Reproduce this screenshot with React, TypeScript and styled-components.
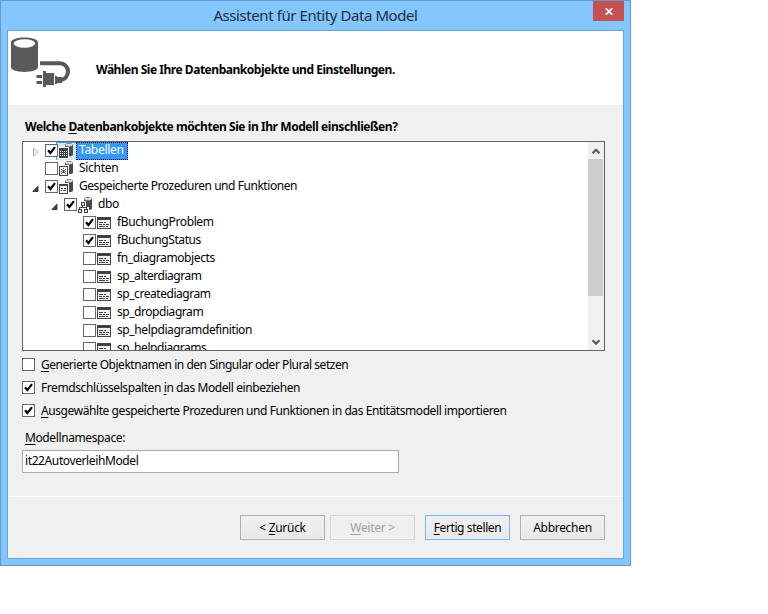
import React from "react";
import styled, { createGlobalStyle, css } from "styled-components";

const Global = createGlobalStyle`
  * { box-sizing: border-box; }
  body {
    margin: 0;
    background: #fff;
    color: #000;
    font: 12px/18px "Noto Sans", "Open Sans", sans-serif;
  }
  svg { display: block; }
`;

const Text = styled.span<{ $size?: number; $track?: number; $bold?: boolean }>`
  font-size: ${(p) => p.$size ?? 12}px;
  letter-spacing: ${(p) => p.$track ?? -0.39}px;
  font-weight: ${(p) => (p.$bold ? 700 : 400)};
  white-space: pre;
`;

const Key = styled.span`
  text-decoration: underline;
  text-decoration-thickness: 1px;
  text-underline-offset: 2px;
  text-decoration-skip-ink: none;
`;

const Window = styled.main`
  width: 631px;
  height: 566px;
  display: flex;
  flex-direction: column;
  padding: 0 6px 6px;
  background: #84c6ff;
  border: 1px solid #6699c8;
`;

const TitleBar = styled.header`
  height: 29px;
  flex: none;
  display: grid;
  grid-template-columns: 31px 1fr 31px;
  align-items: start;
  text-align: center;
  line-height: 29px;
  color: #1c2c3c;
`;

const CloseButton = styled.button`
  width: 31px;
  height: 20px;
  padding: 1px 0 0 12px;
  border: 0;
  background: #c75050;
`;

const Client = styled.div`
  flex: 1;
  display: flex;
  flex-direction: column;
  background: #f0f0f0;
  border: 1px solid #6ba4d8;
`;

const Banner = styled.section`
  height: 74px;
  flex: none;
  display: flex;
  align-items: center;
  background: #fff;
`;

const BannerIcon = styled.div`
  width: 88px;
  height: 74px;
  padding: 6px 0 0 2px;
`;

const BannerText = styled(Text)`
  padding-top: 3px;
`;

const Content = styled.section`
  height: 392px;
  flex: none;
  padding: 13px 18px 0 14px;
  border-bottom: 1px solid #fff;
`;

const Question = styled.div`
  height: 23px;
  padding-left: 3px;
`;

const Tree = styled.div`
  display: flex;
  height: 210px;
  background: #fff;
  border: 1px solid #646464;
`;

const Rows = styled.div`
  flex: 1;
  overflow: hidden;
`;

const Row = styled.div<{ $level: number }>`
  height: 18px;
  display: flex;
  padding-left: ${(p) => p.$level * 19}px;
`;

const Expander = styled.span`
  width: 22px;
  padding: 5px 0 0 9px;
`;

const Box = styled.span`
  width: 13px;
  height: 13px;
  flex: none;
  background: #fff;
  border: 1px solid #666;
`;

const TreeBox = styled(Box)`
  margin-top: 2px;
  position: relative;
  z-index: 1;
`;

const IconCell = styled.span<{ $active?: boolean }>`
  width: 20px;
  margin-left: -2px;
  padding-left: 1px;
  height: 18px;
  ${(p) => p.$active && css`
    background: #cfe9fa;
    box-shadow: inset 1px 1px #3ba4df;
  `}
`;

const Label = styled(Text)<{ $selected?: boolean }>`
  height: 18px;
  padding: 0 3px;
  line-height: 16px;
  ${(p) => p.$selected && css`
    width: 52px;
    color: #fff;
    background: #3399ff;
    outline: 1px dotted #000;
    outline-offset: -1px;
  `}
`;

const ScrollBar = styled.div`
  width: 16px;
  display: flex;
  flex-direction: column;
  justify-content: space-between;
  padding-right: 1px;
  background: #f0f0f0;
`;

const ScrollArrow = styled.span`
  height: 17px;
  padding: 6px 0 0 4px;
`;

const Thumb = styled.span`
  height: 137px;
  margin-bottom: 37px;
  background: #cdcdcd;
`;

const Options = styled.div`
  padding-top: 2px;
`;

const Option = styled.div`
  height: 23px;
  display: flex;
  align-items: center;
  gap: 6px;
  line-height: 17px;
`;

const FieldLabel = styled.div`
  height: 28px;
  padding: 7px 0 0 3px;
`;

const Field = styled.div`
  width: 377px;
  height: 23px;
  padding-left: 2px;
  line-height: 20px;
  background: #fff;
  border: 1px solid #abadb3;
`;

const Footer = styled.footer`
  display: flex;
  justify-content: flex-end;
  padding: 18px 18px 0 0;
`;

const Button = styled.button<{ $kind?: "default" | "disabled"; $gap: number }>`
  width: 85px;
  height: 25px;
  margin-left: ${(p) => p.$gap}px;
  padding: 0;
  font: inherit;
  line-height: 22px;
  color: ${(p) => (p.$kind === "disabled" ? "#a0a0a0" : "#000")};
  background: ${(p) => (p.$kind === "disabled" ? "#efefef" : "linear-gradient(#f0f0f0, #e8e8e8)")};
  border: 1px solid ${(p) => (p.$kind === "default" ? "#7eb4ea" : p.$kind === "disabled" ? "#d5d5d5" : "#acacac")};
  box-shadow: inset 0 0 0 1px ${(p) => (p.$kind === "default" ? "#e5f1fc" : "#f0f0f0")};
`;

const Tick = () => (
  <svg width="11" height="11" viewBox="0 0 11 11">
    <path d="M2 5.2 4.4 8 9 2.2" fill="none" stroke="#000" strokeWidth="2.1" />
  </svg>
);

const CloseGlyph = () => (
  <svg width="8" height="7" viewBox="0 0 8 7">
    <path d="M.7.2 7.3 6.8M7.3.2.7 6.8" stroke="#fff" strokeWidth="1.8" />
  </svg>
);

const DatabasePlug = () => (
  <svg width="62" height="52" viewBox="0 0 62 52" fill="#58595b">
    <path d="M1 5.5C1-1.2 28-1.2 28 5.5V30C28 36.5 1 36.5 1 30Z" />
    <ellipse cx="14.5" cy="6.5" rx="10.7" ry="4.2" fill="#fff" />
    <path d="M30 26.2H50a8 8.4 0 0 1 0 16.8H47" fill="none" stroke="#58595b" strokeWidth="4" />
    <path d="M33 34h3v2h8v12h-8v2h-3ZM44 38l4 2h4v6h-4l-4 2ZM27 38h5v3h-5ZM27 44h5v3h-5Z" />
    <path d="M44 36h1v12h-1z" fill="#fff" />
    <path d="M26 38h1v3h-1zM26 44h1v3h-1z" opacity=".5" />
  </svg>
);

const Cylinder = () => (
  <>
    <path d="M8 3C8 .8 16 .8 16 3V12.6C16 14.2 12 14.6 10 14H8Z" fill="#4a4a4a" />
    <ellipse cx="12" cy="3.1" rx="3.7" ry="1.4" fill="#d9d9d9" />
  </>
);

type Kind = "table" | "view" | "proc" | "schema" | "item";

const NodeIcon = ({ kind }: { kind: Kind }) => {
  if (kind === "item")
    return (
      <svg width="18" height="18" viewBox="0 0 18 18" shapeRendering="crispEdges">
        <path d="M2 3h14v12H2Z" fill="#424242" />
        <path d="M3 6h12v8H3Z" fill="#f3f3f3" />
        <path d="M4 8h4v1H4zM9 8h2v1H9zM4 10h3v1H4zM8 10h2v1H8zM11 10h3v1h-3zM4 12h6v1H4zM11 12h2v1h-2z" fill="#424242" />
      </svg>
    );
  if (kind === "schema")
    return (
      <svg width="18" height="18" viewBox="0 0 18 18">
        <Cylinder />
        <g shapeRendering="crispEdges">
          <path d="M4 5h6v6h3v6H1v-6h3Z" fill="#fff" />
          <path d="M5 6h4v4H5zM6 10h1v2H6zM3 11h8v1H3zM3 12h1v1H3zM10 12h1v1h-1zM2 13h4v4H2zM8 13h4v4H8z" fill="#424242" />
          <path d="M6 7h2v2H6zM3 14h2v2H3zM9 14h2v2H9z" fill="#eee" />
        </g>
      </svg>
    );
  return (
    <svg width="18" height="18" viewBox="0 0 18 18">
      <Cylinder />
      <g shapeRendering="crispEdges">
        <path d="M1 5h11v12H1Z" fill="#fff" />
        <path d="M2 6h9v10H2Z" fill="#424242" />
        {kind === "table" && (
          <path d="M3 9h1v1H3zM5 9h1v1H5zM7 9h1v1H7zM9 9h1v1H9zM3 11h1v1H3zM5 11h1v1H5zM7 11h1v1H7zM9 11h1v1H9zM3 13h1v1H3zM5 13h1v1H5zM7 13h1v1H7zM9 13h1v1H9z" fill="#fff" />
        )}
        {kind === "view" && (
          <>
            <path d="M3 7h7v8H3Z" fill="#fff" />
            <path d="M4 9h1v1H4zM6 8h1v1H6zM8 9h1v1H8zM5 10h3v1H5zM4 11h1v1H4zM6 11h1v1H6zM8 11h1v1H8zM5 12h3v1H5zM4 13h1v1H4zM8 13h1v1H8z" fill="#424242" />
          </>
        )}
        {kind === "proc" && (
          <>
            <path d="M3 8h7v7H3Z" fill="#fff" />
            <path d="M4 10h2v1H4zM7 10h2v1H7zM4 12h1v1H4zM6 12h3v1H6z" fill="#424242" />
          </>
        )}
      </g>
    </svg>
  );
};

const Arrow = ({ open }: { open: boolean }) => (
  <svg width="8" height="11" viewBox="0 0 8 11">
    {open ? (
      <path d="M6 3.2V8.5H.8Z" fill="#404040" stroke="#262626" strokeWidth=".8" />
    ) : (
      <path d="M1.5 1.2V9L5.8 5.1Z" fill="#fff" stroke="#a6a6a6" />
    )}
  </svg>
);

const Chevron = ({ down }: { down?: boolean }) => (
  <svg width="8" height="7" viewBox="0 0 8 7">
    <path d={down ? "M.5 1.2 4 4.6 7.5 1.2" : "M.5 5.2 4 1.8 7.5 5.2"} fill="none" stroke="#5c5c5c" strokeWidth="2.2" />
  </svg>
);

interface Node {
  level: number;
  label: string;
  kind: Kind;
  checked?: boolean;
  open?: boolean;
  selected?: boolean;
  track?: number;
}

const nodes: Node[] = [
  { level: 0, label: "Tabellen", kind: "table", checked: true, open: false, selected: true, track: -0.3 },
  { level: 0, label: "Sichten", kind: "view", track: -0.3 },
  { level: 0, label: "Gespeicherte Prozeduren und Funktionen", kind: "proc", checked: true, open: true, track: -0.45 },
  { level: 1, label: "dbo", kind: "schema", checked: true, open: true },
  { level: 2, label: "fBuchungProblem", kind: "item", checked: true },
  { level: 2, label: "fBuchungStatus", kind: "item", checked: true, track: -0.43 },
  { level: 2, label: "fn_diagramobjects", kind: "item" },
  { level: 2, label: "sp_alterdiagram", kind: "item", track: -0.45 },
  { level: 2, label: "sp_creatediagram", kind: "item", track: -0.45 },
  { level: 2, label: "sp_dropdiagram", kind: "item", track: -0.45 },
  { level: 2, label: "sp_helpdiagramdefinition", kind: "item" },
  { level: 2, label: "sp_helpdiagrams", kind: "item", track: -0.45 },
];

export default function App() {
  return (
    <>
      <Global />
      <Window>
        <TitleBar>
          <span />
          <Text $size={15} $track={-0.42}>Assistent für Entity Data Model</Text>
          <CloseButton aria-label="Schließen"><CloseGlyph /></CloseButton>
        </TitleBar>
        <Client>
          <Banner>
            <BannerIcon><DatabasePlug /></BannerIcon>
            <BannerText $bold $track={-0.47}>Wählen Sie Ihre Datenbankobjekte und Einstellungen.</BannerText>
          </Banner>
          <Content>
            <Question>
              <Text $bold $track={-0.43}>Welche <Key>D</Key>atenbankobjekte möchten Sie in Ihr Modell einschließen?</Text>
            </Question>
            <Tree>
              <Rows>
                {nodes.map((n) => (
                  <Row key={n.label} $level={n.level}>
                    <Expander>{n.open !== undefined && <Arrow open={n.open} />}</Expander>
                    <TreeBox>{n.checked && <Tick />}</TreeBox>
                    <IconCell $active={n.selected}><NodeIcon kind={n.kind} /></IconCell>
                    <Label $selected={n.selected} $track={n.track}>{n.label}</Label>
                  </Row>
                ))}
              </Rows>
              <ScrollBar>
                <ScrollArrow><Chevron /></ScrollArrow>
                <Thumb />
                <ScrollArrow><Chevron down /></ScrollArrow>
              </ScrollBar>
            </Tree>
            <Options>
              <Option>
                <Box />
                <Text $track={-0.46}><Key>G</Key>enerierte Objektnamen in den Singular oder Plural setzen</Text>
              </Option>
              <Option>
                <Box><Tick /></Box>
                <Text $track={-0.41}>Fremdschlüsselspalten <Key>i</Key>n das Modell einbeziehen</Text>
              </Option>
              <Option>
                <Box><Tick /></Box>
                <Text $track={-0.42}><Key>A</Key>usgewählte gespeicherte Prozeduren und Funktionen in das Entitätsmodell importieren</Text>
              </Option>
            </Options>
            <FieldLabel><Text><Key>M</Key>odellnamespace:</Text></FieldLabel>
            <Field><Text>it22AutoverleihModel</Text></Field>
          </Content>
          <Footer>
            <Button $gap={0}><Text $track={-0.3}>&lt; <Key>Z</Key>urück</Text></Button>
            <Button $gap={5} $kind="disabled"><Text $track={-0.3}><Key>W</Key>eiter &gt;</Text></Button>
            <Button $gap={10} $kind="default"><Text $track={-0.4}><Key>F</Key>ertig stellen</Text></Button>
            <Button $gap={10}><Text $track={-0.3}>Abbrechen</Text></Button>
          </Footer>
        </Client>
      </Window>
    </>
  );
}
